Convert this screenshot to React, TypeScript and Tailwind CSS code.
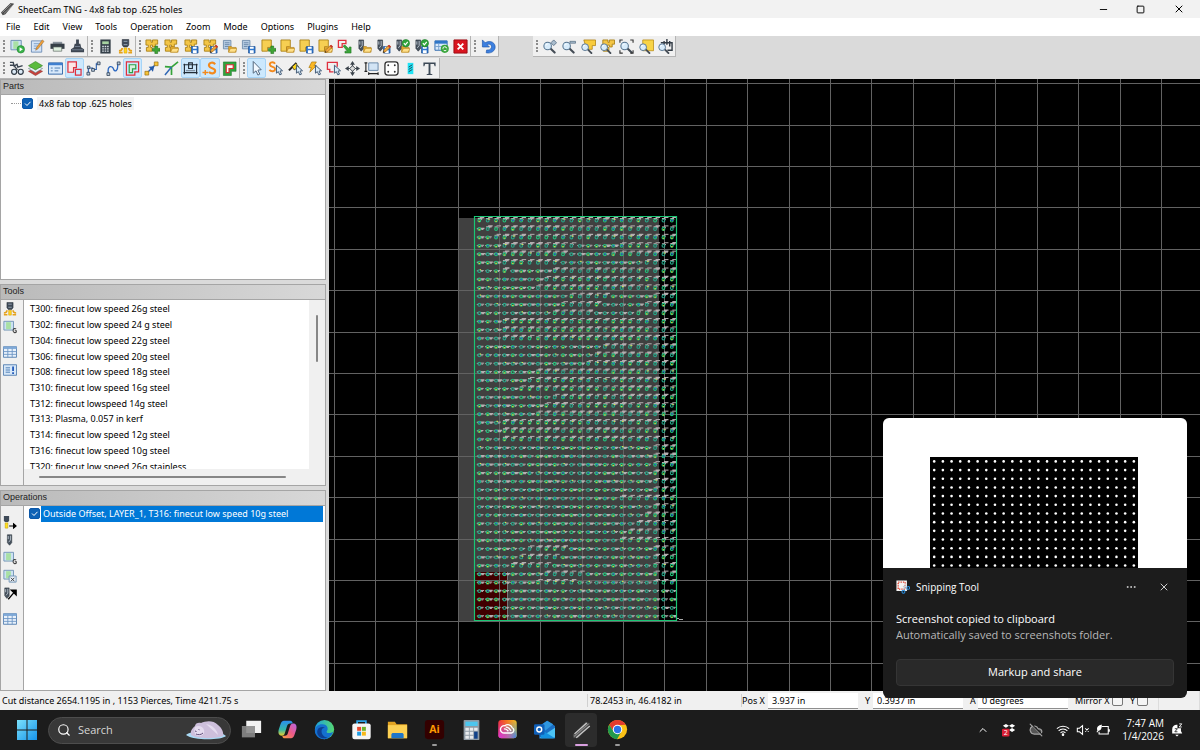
import { useState } from "react";
import type { ReactNode } from "react";
import clsx from "clsx";
import { ChevronUp, CloudOff, Ellipsis, Minus, Search, Square, X } from "lucide-react";

/* ---------- icon building blocks, all on a 16x16 box ---------- */

function Icon({ children, className }: { children: ReactNode; className?: string }) {
  return (
    <svg viewBox="0 0 16 16" className={className || "h-4 w-4"} fill="none" aria-hidden="true">
      {children}
    </svg>
  );
}

const Plus = () => <path d="M10.500 7.500h3v2.500h2.500v3h-2.500v2.500h-3v-2.500H8v-3h2.500z" fill="#3fa535" stroke="#1d6b18" strokeWidth=".6" />;
const Folder = () => (
  <>
    <path d="M7 14V8h3l1 1h4v5z" fill="#e0a92c" stroke="#a8781a" strokeWidth=".6" />
    <path d="M7 14l2-4h7l-2 4z" fill="#ffe08a" stroke="#b8871f" strokeWidth=".6" />
  </>
);
const Disk = () => (
  <>
    <path d="M8 8h7v7H8z" fill="#2f78d0" stroke="#174a8c" strokeWidth=".7" />
    <path d="M9.500 8.300h4v2.200h-4zM9.500 12h4v3h-4z" fill="#fff" />
  </>
);
const Pencil = () => (
  <>
    <path d="M7.500 14.500l1-3 5-5 2 2-5 5z" fill="#f0a63c" stroke="#8a5a14" strokeWidth=".6" />
    <path d="M12.500 7.500l1.500-1.500 2 2-1.500 1.500z" fill="#c9342b" />
    <path d="M7.500 14.500l.5-1.700 1.200 1.200z" fill="#222" />
  </>
);
const Check = () => (
  <>
    <circle cx="11.500" cy="4.500" r="4" fill="#2fa43a" stroke="#1a7425" strokeWidth=".6" />
    <path d="M9.500 4.500l1.500 1.700 2.600-3.200" stroke="#fff" strokeWidth="1.300" />
  </>
);
const Parts = () => (
  <path
    d="M1 1h5.500v2.500H8V1h5.500v4.500H11v3H8v-2H6v2.500h1.500v4H1.500V9h2V6.500H1z"
    fill="#f3c546"
    stroke="#a67c12"
    strokeWidth=".9"
  />
);
const Block = () => <path d="M1 1h10v8H7v4H1z" fill="#f6cf52" stroke="#a67c12" strokeWidth=".9" />;
const Sheets = () => (
  <>
    <path d="M1.500 1.500h8v9h-8z" fill="#b7cce2" stroke="#6b88a8" strokeWidth=".9" />
    <path d="M3 4h5M3 6h5M3 8h4" stroke="#6483a5" strokeWidth=".9" />
  </>
);
const Drill = () => (
  <>
    <path d="M2 1h5v9l-2.500 3L2 10z" fill="#47525e" stroke="#28313a" strokeWidth=".6" />
    <path d="M3 6V2.500M3.500 9.500L5.500 7V2" stroke="#c8d2dc" strokeWidth=".9" />
  </>
);
const Lens = () => (
  <>
    <path d="M8.500 9.500l5 5" stroke="#444c55" strokeWidth="2.200" strokeLinecap="round" />
    <circle cx="6" cy="7.500" r="4" fill="#d8ecfb" stroke="#54738f" strokeWidth="1.100" />
    <path d="M4 7a2 2 0 0 1 2-1.700" stroke="#fff" strokeWidth="1" />
  </>
);
const Pointer = () => (
  <path d="M7.500 4.500v8.500l2-1.700 1.600 3.500 1.800-.8-1.600-3.300 2.700-.3z" fill="#d9ecfb" stroke="#3c5470" strokeWidth="1" />
);
const Sheet = () => (
  <>
    <path d="M1 1.500h11v10H1z" fill="#cde2f3" stroke="#6d90b3" strokeWidth="1" />
    <path d="M3.500 2.500h5.500v8H3.500z" fill="#a9e0a4" />
  </>
);
const Torch = () => (
  <>
    <path d="M4.500.500h7v6l-1.500 2H6l-1.500-2z" fill="#3f4a58" stroke="#272f39" strokeWidth=".6" />
    <path d="M6 2.500h4M6 6h4" stroke="#98a7b6" strokeWidth="1" />
    <path d="M6.500 9.500h3V15h-3z" fill="#ffd51c" stroke="#d79a00" strokeWidth=".6" />
    <path d="M4.500 9.500c0 2-1 3-3.500 3M11.500 9.500c0 2 1 3 3.500 3M1 14.500h4M11 14.500h4" stroke="#e5a11a" strokeWidth="1.800" />
  </>
);

const row1a = [
  ["Process new job", <><Sheet /><circle cx="11.500" cy="11" r="4" fill="#39b44a" stroke="#1c7d2a" strokeWidth=".6" /><path d="M10.200 8.800v4.400l3.500-2.200z" fill="#fff" /></>],
  ["Edit job", <><path d="M1.500 2h11v12h-11z" fill="#d5e4f7" stroke="#6f8fb8" /><path d="M4 5h6M4 7.500h5M4 10h4" stroke="#7c9fca" /><path d="M6 12l1-3L13 1l2 1.500-6.500 8z" fill="#f0a03a" stroke="#8b5c20" strokeWidth=".5" /></>],
  ["Print", <><path d="M3 3h10v3H3z" fill="#8a939c" /><path d="M.5 5h15v5.500H.5z" fill="#363f47" /><path d="M3.500 8.500h9V13h-9z" fill="#dff0df" stroke="#58625f" strokeWidth=".7" /></>],
  ["Run post", <><path d="M6.500.500h3V5H11l1 4 3 2v3H1v-3l3-2 1-4h1.500z" fill="#3d4652" /><path d="M2 11.500h12M5 8h6" stroke="#738091" /></>],
] as [string, ReactNode][];

const row1b = [
  ["Calculator", <><path d="M2.500.500h11v15h-11z" fill="#343f48" /><path d="M4.500 2.500h7v3h-7z" fill="#a7d3a0" /><path d="M4.500 8h7M4.500 10.500h7M4.500 13h7" stroke="#dde4ea" strokeWidth="1.400" strokeDasharray="1.700 .9" /></>],
  ["Tool set", <Torch />],
] as [string, ReactNode][];

const row1c = [
  ["New part set", <><Parts /><Plus /></>],
  ["Open part set", <><Parts /><Folder /></>],
  ["Save part set", <><Parts /><Disk /></>],
  ["Edit part set", <><Parts /><Disk /><Pencil /></>],
  ["Open sheets", <><Sheets /><Folder /></>],
  ["Save sheets", <><Sheets /><Disk /></>],
  ["New part", <><Block /><Plus /></>],
  ["Open part", <><Block /><Folder /></>],
  ["Save part", <><Block /><Disk /></>],
  ["Edit part", <><Block /><Folder /><Pencil /></>],
  ["Import drawing", <><path d="M1.500 1.500h8v3.500H5.500v4h-4z" stroke="#e02f3c" strokeWidth="1.400" /><path d="M6.500 7.500l2-1 4.500 4.500V8.500h2V15H8.500v-2H11z" fill="#3aa63a" stroke="#1d741d" strokeWidth=".6" /></>],
  ["Open tools", <><Drill /><Folder /></>],
  ["Edit tools", <><Drill /><Disk /><Pencil /></>],
  ["Open checked tools", <><Drill /><Folder /><Check /></>],
  ["Save checked tools", <><Drill /><Disk /><Check /></>],
  ["Reload table", <><path d="M1 2h13v10H1z" fill="#d9e9fa" stroke="#2c67ad" /><path d="M1 2h13v3H1z" fill="#2f76c8" /><path d="M1 8h13M5 5v7" stroke="#7aa3d1" /><circle cx="11.500" cy="10.500" r="4.300" fill="#39a53c" /><path d="M9.500 10.500a2 2 0 0 1 4-.5M13.500 11.500a2 2 0 0 1-3.500 0" stroke="#fff" strokeWidth="1" /></>],
  ["Stop", <><path d="M1 1h14v14H1z" fill="#d9151f" stroke="#9c0c14" /><path d="M5 5l6 6M11 5l-6 6" stroke="#fff" strokeWidth="2" /></>],
] as [string, ReactNode][];

const row1d = [
  ["Undo", <><path d="M1.500 1v7.500h7.500L6.500 6C10 4.500 12 7 11 9.500c-.8 2-3 2.500-5 2.200l-.5 3c4 .9 8.500-.8 9.500-5C16 4.500 10.500.5 4.500 4z" fill="#3d80e0" stroke="#1f55a8" strokeWidth=".7" /></>],
] as [string, ReactNode][];

const zoomBar = [
  ["Zoom in", <><Lens /><path d="M12.500 1l3 3-3 3-3-3z" fill="#a9bccd" stroke="#4b6379" strokeWidth=".8" /></>],
  ["Zoom out", <><Lens /><path d="M9.500 2.500h6v2h-6z" fill="#a9bccd" stroke="#4b6379" strokeWidth=".7" /></>],
  ["Zoom to part", <><path d="M3 1h12.500v6H12v4H6z" fill="#f8cb3c" stroke="#ad7e0c" strokeWidth=".8" /><g transform="translate(-1 2) scale(.9)"><Lens /></g></>],
  ["Zoom to parts", <><g transform="translate(2 0)"><Parts /></g><g transform="translate(-1 2) scale(.9)"><Lens /></g></>],
  ["Zoom to extents", <><Lens /><path d="M1 4V1h3M12 1h3v3M15 12v3h-3M4 15H1v-3" stroke="#333" strokeWidth="1.200" /></>],
  ["Zoom to sheet", <><path d="M4 1h11.500v11.500H4z" fill="#f8d447" stroke="#b88a12" strokeWidth=".8" /><g transform="translate(-1 2) scale(.9)"><Lens /></g></>],
  ["Zoom to machine", <><path d="M3 4h12v8h-5M6.500 2v4M9.500 0v6M12.500 2v6" stroke="#333c46" strokeWidth="1.500" /><g transform="translate(-1 2) scale(.9)"><Lens /></g></>],
] as [string, ReactNode][];

const row2a = [
  ["Machine view", <><path d="M1 1.500h3.500l1 4 3-2 1 3 5-1.500M1 4.500h4l4 5" stroke="#3a4450" strokeWidth="1.500" /><circle cx="5.500" cy="11.500" r="2.700" fill="#dceaf6" stroke="#2f3944" strokeWidth="1.300" /><circle cx="12.500" cy="11.500" r="2.700" fill="#dceaf6" stroke="#2f3944" strokeWidth="1.300" /></>],
  ["Layers", <><path d="M.5 11L8 8l7.500 3L8 15.500z" fill="#c8413b" stroke="#8c2723" strokeWidth=".6" /><path d="M.5 8L8 5l7.500 3L8 12.500z" fill="#e7f0f7" stroke="#577" strokeWidth=".6" /><path d="M.5 5L8 .5 15.500 5 8 9.500z" fill="#5bbb3e" stroke="#2f7c1f" strokeWidth=".6" /></>],
  ["Properties", <><path d="M.5 2h15v12H.5z" fill="#d8e9fb" stroke="#2f65a6" /><path d="M.5 2h15v2.500H.5z" fill="#3f7fcf" /><path d="M3 7.500h2M7 7.500h6M3 10.500h2M7 10.500h4" stroke="#4b7ab0" /></>],
  ["Show outlines", <><path d="M1 1h9v6H7v5H1z" fill="#fde5e5" stroke="#df2f3f" strokeWidth="1.300" /><path d="M9 9h6v6H9z" stroke="#df2f3f" strokeWidth="1.300" /></>],
  ["Show nodes", <><path d="M2.500 13V7.500h4.500V9l4 0V3h3" stroke="#2a5fae" strokeWidth="1.200" /><path d="M1 12h3v3H1zM1.500 5.500h2.600v2.600H1.500zM6 8h3v3H6zM12 1h3v3h-3z" fill="#b8c8da" stroke="#26384e" strokeWidth=".8" /></>],
  ["Show path", <><path d="M2.500 13.500C1 4 7 5 8 8.500s5 3 4.500-5.500" stroke="#2a66c0" strokeWidth="1.400" /><path d="M1 12.500h3v3H1zM12 1h3v3h-3z" fill="#b8c8da" stroke="#26384e" strokeWidth=".8" /></>],
  ["Show offset", <><path d="M1.500 1h13v10.500h-4V15h-9z" stroke="#e02f3c" strokeWidth="1.300" /><path d="M4.500 4h7v4.500H8v4H4.500z" fill="#d8f1df" stroke="#2ca046" strokeWidth="1.300" /></>],
  ["Show rapids", <><path d="M3.500 12.500l9-9" stroke="#2a66c0" strokeWidth="1.500" /><path d="M5 6l6-.5-1.500 6z" fill="#2459a8" /><path d="M1 11h4v4H1zM11 1h4v4h-4z" fill="#f5c235" stroke="#94690a" strokeWidth=".7" /></>],
  ["Show direction", <><path d="M1 6l7 .5L15 1M8 6.500V15" stroke="#35a33a" strokeWidth="1.800" /><path d="M1 15l7-8.500" stroke="#3168b5" strokeWidth="1.600" /></>],
  ["Show machine", <><path d="M.5 4h15M.5 12.500h15" stroke="#222c37" strokeWidth="1.300" /><path d="M1.500 3v11M14.500 3v11M6 2h4v6H6z" stroke="#222c37" strokeWidth="1.200" /><path d="M3 9.500h10v1.500H3z" fill="#8393a3" /></>],
  ["Show starts", <><path d="M14 3.500C12 .5 7 1.500 7.500 5s6.500 2 6.500 5.500-5 3.500-6.500 1" stroke="#f38a1d" strokeWidth="2.300" /><path d="M3.500 9.500v5.500M.5 12.200h6" stroke="#f38a1d" strokeWidth="1.500" /></>],
  ["Show cut width", <><path d="M1.500 1H15v10h-5v4.500H1.500z" fill="#2fa43c" stroke="#1b7326" strokeWidth=".6" /><path d="M4.500 4H12v4H7.500v4.500h-3z" fill="#fff" stroke="#de2b37" strokeWidth="1.300" /></>],
] as [string, ReactNode][];

const row2b = [
  ["Select", <path d="M4.500.500v12.500l3-2.500L9.500 15l2-1-2-4.300 3.500-.4z" fill="#f3f9ff" stroke="#4d6279" strokeWidth="1" />],
  ["Select starts", <><path d="M7.500 3C6 .5 1.500 1 2 4s5.500 1.500 5.500 4.500S3 11.500 1.500 9.500" stroke="#f38a1d" strokeWidth="2" /><g transform="translate(1.500 0)"><Pointer /></g></>],
  ["Edit start points", <><path d="M1 10l8-8" stroke="#222" strokeWidth="2.200" /><path d="M4.500 6l4-3.500 3 4-5 3z" fill="#ffd91c" stroke="#222" strokeWidth=".7" /><g transform="translate(1.500 0)"><Pointer /></g></>],
  ["Edit tabs", <><path d="M5 1h5L7.500 5H10l-7 7 1.500-5H2z" fill="#fbb823" stroke="#a87509" strokeWidth=".7" /><g transform="translate(1.500 0)"><Pointer /></g></>],
  ["Select contour", <><path d="M8 11.500H4V9H1.500V1.500H12V6" stroke="#df2f3f" strokeWidth="1.400" /><g transform="translate(1.500 0)"><Pointer /></g></>],
  ["Pan", <><path d="M8 1v14M1 8h14" stroke="#3c444c" strokeWidth="1.200" /><path d="M8 0l2.600 4H5.400zM8 16l-2.600-4h5.200zM0 8l4-2.600v5.200zM16 8l-4 2.600V5.400z" fill="#3c444c" /><path d="M8 5l3 3-3 3-3-3z" fill="#ddd" stroke="#3c444c" /></>],
  ["Measure", <><path d="M5 2h10v8H5z" fill="#d2e4f5" stroke="#6585a6" /><path d="M2 2v9M.5 2h3M.5 11h3M5 13.500h10M5 12v3M15 12v3" stroke="#222" strokeWidth="1.200" /></>],
  ["Plate corners", <><rect x="1" y="1" width="14" height="14" rx="3" fill="#fff" stroke="#333" strokeWidth="1.400" /><path d="M4.500 4.500h.01M11.500 4.500h.01M4.500 11.500h.01M11.500 11.500h.01" stroke="#333" strokeWidth="2" strokeLinecap="round" /></>],
  ["Cut sheet", <><path d="M5 2h6v12H5z" fill="#1fe3f5" /><path d="M6 6.500L10 4M6 9l4-2.500M6 11.500L10 9" stroke="#234" strokeWidth=".9" /></>],
  ["Text", <path d="M1.500 1.500h13v4h-1l-.8-2.300H9v10.300l2 .5v1H5v-1l2-.5V3.200H3.300l-.8 2.300h-1z" fill="#3d4956" />],
] as [string, ReactNode][];

const tableIcon = (
  <>
    <path d="M.5 2h15v12H.5z" fill="#e8f1fb" stroke="#4b79ad" />
    <path d="M.5 2h15v2.500H.5z" fill="#7fa9d8" />
    <path d="M1 7.500h14M1 10.700h14M5.500 4v10M10.500 4v10" stroke="#6b95c4" />
  </>
);

const sheetG = (
  <>
    <Sheet />
    <path d="M15 10.500c-1-1.200-3.500-1-3.500 1.500s2.500 3 3.700 1.800v-1.500h-1.700" stroke="#444" strokeWidth="1.200" />
  </>
);

function ToolButton({ label, children, active }: { label: string; children: ReactNode; active?: boolean }) {
  return (
    <button
      type="button"
      aria-label={label}
      className={clsx(
        "flex min-w-0 flex-1 items-center justify-center rounded-xs border",
        active ? "border-[#a6d4f7] bg-[#cce8fd]" : "border-transparent hover:bg-[#e0f0fc]",
      )}
    >
      <Icon className="h-[15px] w-[15px] shrink-0">{children}</Icon>
    </button>
  );
}

function Toolbar({ items, width, active = [] }: { items: [string, ReactNode][]; width: string; active?: string[] }) {
  return (
    <div className={clsx("flex h-[21px] border-r border-b border-[#b4b4b4] bg-[#f0f0f0] pl-[3px]", width)}>
      <div className="my-1 w-1 border-l-2 border-dotted border-[#8c8c8c]" />
      <div className="flex flex-1">
        {items.map(([label, art]) => (
          <ToolButton key={label} label={label} active={active.includes(label)}>
            {art}
          </ToolButton>
        ))}
      </div>
    </div>
  );
}

/* ---------- left dock ---------- */

const tools = [
  "T300: finecut low speed 26g steel",
  "T302: finecut low speed 24 g steel",
  "T304: finecut low speed 22g steel",
  "T306: finecut low speed 20g steel",
  "T308: finecut low speed 18g steel",
  "T310: finecut low speed 16g steel",
  "T312: finecut lowspeed 14g steel",
  "T313: Plasma, 0.057 in kerf",
  "T314: finecut low speed 12g steel",
  "T316: finecut low speed 10g steel",
  "T320: finecut low speed 26g stainless",
];

function Panel({ title, side, children }: { title: string; side?: ReactNode; children: ReactNode }) {
  return (
    <section className="flex min-h-0 flex-1 flex-col border border-[#a5a5a5] bg-[#f0f0f0]">
      <h2 className="h-[15px] shrink-0 border-b border-[#a5a5a5] bg-linear-to-r from-[#bababa] to-[#d8d8d8] pl-0.5 font-['Liberation_Sans'] text-[9px] leading-[13px] text-[#222]">
        {title}
      </h2>
      <div className="flex min-h-0 flex-1">
        {side && <div className="flex w-[23px] shrink-0 flex-col border-r border-[#a5a5a5] pl-px">{side}</div>}
        {children}
      </div>
    </section>
  );
}

function SideButton({ label, children }: { label: string; children: ReactNode }) {
  return (
    <button type="button" aria-label={label} className="flex h-[18px] w-4 items-center justify-center">
      <Icon className="h-[14px] w-[14px]">{children}</Icon>
    </button>
  );
}

function Tick({ id, checked, onChange }: { id: string; checked: boolean; onChange: () => void }) {
  return (
    <span className="grid h-[11px] w-[11px] shrink-0">
      <input
        id={id}
        type="checkbox"
        checked={checked}
        onChange={onChange}
        className="col-start-1 row-start-1 h-[11px] w-[11px] appearance-none rounded-[2px] border border-[#0b57a8] bg-white checked:bg-[#0f62b5]"
      />
      {checked && (
        <svg viewBox="0 0 11 11" className="pointer-events-none col-start-1 row-start-1 h-[11px] w-[11px]" fill="none">
          <path d="M3 5.500l2 2 3.500-3.700" stroke="#fff" strokeWidth="1" />
        </svg>
      )}
    </span>
  );
}

function LeftDock() {
  const [partOn, setPartOn] = useState(true);
  const [opOn, setOpOn] = useState(true);

  return (
    <aside className="flex w-[326px] shrink-0 flex-col gap-1">
      <Panel title="Parts">
        <div className="flex-1 bg-white pt-0.5 pl-2.5">
          <div className="flex items-center">
            <span className="mr-px w-[10px] border-t border-dotted border-[#999]" />
            <Tick id="part" checked={partOn} onChange={() => setPartOn(!partOn)} />
            <label htmlFor="part" className="ml-1 bg-[#f3f3f3] px-0.5 leading-[13px]">
              4x8 fab top .625 holes
            </label>
          </div>
        </div>
      </Panel>

      <Panel
        title="Tools"
        side={
          <>
            <SideButton label="New tool"><Torch /></SideButton>
            <SideButton label="Tool code">{sheetG}</SideButton>
            <span className="h-[7px]" />
            <SideButton label="Tool table">{tableIcon}</SideButton>
            <SideButton label="Tool notes">
              <path d="M.5 2h15v12H.5z" fill="#d6e7f8" stroke="#4b79ad" />
              <path d="M3 5.500h5M3 8h5M3 10.500h5" stroke="#3f73ae" />
              <path d="M11.500 4v5M11.500 10.500v2" stroke="#1d55b8" strokeWidth="2" />
            </SideButton>
          </>
        }
      >
        <div className="flex min-w-0 flex-1 flex-col">
          <div className="flex min-h-0 flex-1">
            <div className="min-h-0 flex-1 overflow-hidden bg-white">
              <ul className="grid h-[174px] auto-rows-fr pt-px pl-[6px] leading-[15px]">
                {tools.map((t) => (
                  <li key={t}>{t}</li>
                ))}
              </ul>
            </div>
            <div className="flex w-4 flex-col items-center pt-[15px]">
              <span className="h-[47px] w-0.5 rounded bg-[#868686]" />
            </div>
          </div>
          <div className="flex h-4 items-center pl-[15px]">
            <span className="h-0.5 w-[247px] rounded bg-[#868686]" />
          </div>
        </div>
      </Panel>

      <Panel
        title="Operations"
        side={
          <>
            <span className="h-[7px]" />
            <SideButton label="New jet operation">
              <path d="M1 1h6v5L6 8H2L1 6z" fill="#3f4a58" /><path d="M2.500 9h3v6h-3z" fill="#ffe11c" stroke="#c79b00" strokeWidth=".6" />
              <path d="M7 12.500h8M12 10l3 2.500-3 2.500z" fill="#000" stroke="#000" strokeWidth="1.200" />
            </SideButton>
            <SideButton label="New drill operation"><g transform="translate(3 1)"><Drill /></g></SideButton>
            <SideButton label="Insert code">{sheetG}</SideButton>
            <SideButton label="Insert rule">
              <Sheet />
              <path d="M7 8h8v7H7z" fill="#e6eff8" stroke="#6d90b3" />
              <path d="M9 10l4 4M13 10l-4 4" stroke="#333" />
            </SideButton>
            <SideButton label="Move operation">
              <Drill />
              <path d="M6 14l6-7M9.500 3.500H15V9z" fill="#000" stroke="#000" strokeWidth="1.500" />
            </SideButton>
            <span className="h-[7px]" />
            <SideButton label="Operation table">{tableIcon}</SideButton>
          </>
        }
      >
        <div className="min-w-0 flex-1 bg-white pr-0.5 pl-[5px]">
          <div className="flex items-center">
            <Tick id="op" checked={opOn} onChange={() => setOpOn(!opOn)} />
            <label htmlFor="op" className="ml-px h-4 flex-1 bg-[#0078d7] pl-0.5 leading-[15px] whitespace-nowrap text-white">
              Outside Offset, LAYER_1, T316: finecut low speed 10g steel
            </label>
          </div>
        </div>
      </Panel>
    </aside>
  );
}

/* ---------- drawing area ---------- */

const COLS = 24;
const ROWS = 48;

function noise(a: number, b: number) {
  const n = Math.sin(a * 12.9898 + b * 78.233) * 43758.5453;
  return n - Math.floor(n);
}

// the rapid label next to a pierce sits level with it on some runs and above it on others
function isLevel(col: number, row: number) {
  if (row > 43) return true;
  if (col < 3) return row > col;
  if (col > 20) return false;
  return noise(Math.floor((col + row) / 5), Math.floor(row / 3) + 3) < 0.05 + row / 75;
}

function Hole({ col, row }: { col: number; row: number }) {
  const x = 150.3 + col * 8.37;
  const y = 141.3 + row * 8.42;
  const n = noise(col, row);
  const m = noise(row + 7, col + 2);
  const label = isLevel(col, row)
    ? `M${x - 2.500} ${y}h1.500M${x + 1} ${y - 0.300}h${3 + m * 2}M${x + 2} ${y + 0.700}h${1 + m * 2}`
    : `M${x - 1.500} ${y - 1.800}h${3 + m * 3}M${x + 0.500} ${y - 2.800}h4.500M${x + 1.500} ${y - 1}h1`;
  return (
    <g>
      <path d={label} stroke="#b5afb1" strokeWidth={m > 0.5 ? 1.3 : 1} />
      <circle cx={x} cy={y + 0.300} r="1.400" stroke={n > 0.6 ? "#27a88a" : "#22c37c"} strokeWidth="1.100" />
      {n < 0.35 && <path d={`M${x - 0.700} ${y + 1}h1.500`} stroke="#c9d63a" strokeWidth="1.200" />}
      {n > 0.35 && n < 0.55 && <path d={`M${x - 0.500} ${y}h1.500`} stroke="#2c62dc" strokeWidth="1.300" />}
      {n > 0.9 && <path d={`M${x + 0.500} ${y - 1}h1.300`} stroke="#e0e04a" strokeWidth="1.100" />}
    </g>
  );
}

function Canvas() {
  const lines = Array.from({ length: 80 }, (_, i) => i);
  return (
    <main className="flex min-w-0 flex-1 bg-black">
      <svg width="100%" height="100%" fill="none" role="img" aria-label="Nested part with tool paths">
        <path d="M129 139h201v404H129z" fill="#404040" />
        <path d="M146 493h32v48h-32z" fill="#400000" />
        <path d="M178.500 493v48" stroke="#777" />
        {lines.map((i) => (
          <g key={i} stroke="#626262">
            <line x1={Math.round(4.500 + i * 41.370) + 0.500} x2={Math.round(4.500 + i * 41.370) + 0.500} y1="0" y2="100%" />
            <line x1="0" x2="100%" y1={Math.round(4.200 + i * 41.400) + 0.500} y2={Math.round(4.200 + i * 41.400) + 0.500} />
          </g>
        ))}
        {Array.from({ length: ROWS }, (_, row) =>
          Array.from({ length: COLS }, (_, col) => <Hole key={`${row}-${col}`} col={col} row={row} />),
        )}
        <path d="M145.500 137.500h202v404h-202z" stroke="#18c774" strokeWidth="1.200" />
        <path d="M348 539.500h2M350 540.500h4" stroke="#aaa" />
      </svg>
    </main>
  );
}

/* ---------- notification ---------- */

function Toast() {
  return (
    <div
      role="status"
      className="absolute right-[13px] bottom-[52px] w-[304px] overflow-hidden rounded-md bg-[#1c1c1c] font-['Open_Sans',sans-serif] text-[11px] text-white"
    >
      <div className="flex h-[150px] items-end justify-center bg-white pr-0.5">
        <svg width="208" height="111" aria-hidden="true">
          <rect width="208" height="111" fill="#000" />
          {Array.from({ length: 13 * 24 }, (_, i) => (
            <circle key={i} cx={4.200 + (i % 24) * 8.680} cy={4.400 + Math.floor(i / 24) * 8.680} r="1.300" fill="#fff" />
          ))}
        </svg>
      </div>
      <div className="px-[13px] pt-[11px] pb-3">
        <div className="flex h-4 items-center">
          <svg viewBox="0 0 16 16" className="h-[14px] w-[14px]" fill="none" aria-hidden="true">
            <path d="M.5.500h12v12H.5z" fill="#f4f4f4" />
            <path d="M2.500 2.500h8v8h-8z" stroke="#e0402a" strokeWidth="1.500" strokeDasharray="1.500 1.200" />
            <path d="M8 7l5 4M11 6l-3 6" stroke="#bdc6cf" strokeWidth="1.300" />
            <circle cx="14" cy="9" r="1.600" stroke="#2a8fe0" strokeWidth="1.200" />
            <circle cx="8.500" cy="13.500" r="1.700" stroke="#2a8fe0" strokeWidth="1.200" />
          </svg>
          <span className="ml-[6px] flex-1 text-[10px]">Snipping Tool</span>
          <button type="button" aria-label="More" className="mr-[21px]">
            <Ellipsis className="h-3 w-3 text-[#ccc]" />
          </button>
          <button type="button" aria-label="Dismiss" className="mr-1">
            <X className="h-3 w-3 text-[#ccc]" strokeWidth={2} />
          </button>
        </div>
        <p className="mt-4 leading-4">Screenshot copied to clipboard</p>
        <p className="leading-4 text-[#b8b8b8]">Automatically saved to screenshots folder.</p>
        <button type="button" className="mt-4 h-[27px] w-full rounded border border-[#353535] bg-[#292929]">
          Markup and share
        </button>
      </div>
    </div>
  );
}

/* ---------- status bar ---------- */

function StatusBar() {
  const field = "h-4 w-[90px] border-b border-[#8e8e8e] bg-white px-1";
  const box = "h-[11px] w-[11px] appearance-none rounded-[2px] border border-[#777] bg-[#f5f5f5] checked:bg-[#0f62b5]";
  return (
    <footer className="flex h-[19px] items-center bg-[#f0f0f0] whitespace-nowrap">
      <span className="flex-1 pl-0.5">Cut distance 2654.1195 in , 1153 Pierces, Time 4211.75 s</span>
      <span className="w-[154px] border-l border-[#d0d0d0] pl-0.5">78.2453 in, 46.4182 in</span>
      <label htmlFor="posx" className="w-[27px] border-l border-[#d0d0d0]">Pos X</label>
      <input id="posx" className={field} defaultValue="3.937 in" />
      <label htmlFor="posy" className="w-[15px] pl-[7px]">Y</label>
      <input id="posy" className={field} defaultValue="0.3937 in" />
      <label htmlFor="angle" className="w-[15px] pl-[7px]">A</label>
      <input id="angle" className={field} defaultValue="0 degrees" />
      <label htmlFor="mx" className="w-[44px] pl-[7px]">Mirror X</label>
      <input id="mx" type="checkbox" className={box} />
      <label htmlFor="my" className="w-[14px] pl-[7px]">Y</label>
      <input id="my" type="checkbox" className={box} />
      <span className="ml-[10px] h-full w-[42px] border-x border-[#dcdcdc]" />
    </footer>
  );
}

/* ---------- taskbar ---------- */

const apps = [
  { name: "Task View", art: <><path d="M6 2h17v14H6z" fill="#f2f2f2" /><path d="M1 8h15v13H1z" fill="#8a8a8a" fillOpacity=".9" /></> },
  {
    name: "Copilot",
    art: (
      <>
        <path d="M8 2h7c2 0 2.500 1 3 3h-3c-2 0-3 1-3.500 3L9 16c-.5 2-1.500 3-3.500 3C2 19 1 16 2 12l2-6c.8-2.500 2-4 4-4z" fill="url(#cpa)" />
        <path d="M16 22H9c-2 0-2.500-1-3-3h3c2 0 3-1 3.500-3L15 8c.5-2 1.500-3 3.500-3 3.500 0 4.500 3 3.500 7l-2 6c-.8 2.500-2 4-4 4z" fill="url(#cpb)" />
      </>
    ),
  },
  {
    name: "Edge",
    art: (
      <>
        <circle cx="12" cy="12" r="11" fill="url(#edg)" />
        <path d="M1 13C1.500 8 6 5.500 10 6c4 .4 6 3 5.500 6-.3 1.500-1.500 2-1 3 .7 1.500 5 1.500 7.500-.5-1.500 5-6 8.500-10.500 8.500C5.500 23 .7 18 1 13z" fill="#1470cf" />
        <path d="M9 12c-1.500 4 1.500 8.500 6.500 9.500C8 24 2 18.500 4 12.500 5.500 9 10 8.500 12.500 10c-1.800 0-3 .8-3.500 2z" fill="#0d3f91" />
      </>
    ),
  },
  {
    name: "Microsoft Store",
    art: (
      <>
        <path d="M7 6V2.500h10V6" stroke="#2ba4e8" strokeWidth="2" />
        <rect x="1.500" y="5" width="21" height="18" rx="2.500" fill="#f5f5f5" />
        <path d="M7 9h4.500v4.500H7z" fill="#e8482e" /><path d="M12.500 9H17v4.500h-4.500z" fill="#6bb52c" />
        <path d="M7 14.500h4.500V19H7z" fill="#1e9ce4" /><path d="M12.500 14.500H17V19h-4.500z" fill="#f6b91a" />
      </>
    ),
  },
  {
    name: "File Explorer",
    art: (
      <>
        <path d="M1 3h8l2 3h12v16H1z" fill="#e2a322" />
        <path d="M1 7h22v15H1z" fill="#fcd053" />
        <path d="M5 22v-4c0-1.500 1-2 2-2h10c1 0 2 .5 2 2v4z" fill="#1f76c8" />
      </>
    ),
  },
  {
    name: "Illustrator",
    dot: "bg-[#9a9a9a] w-[5px]",
    art: (
      <>
        <rect x="1" y="1" width="22" height="22" rx="3.500" fill="#330000" />
        <text x="12" y="16.500" textAnchor="middle" fontFamily="Open Sans" fontWeight="700" fontSize="12" fill="#ff9a00">Ai</text>
      </>
    ),
  },
  {
    name: "Calculator",
    art: (
      <>
        <rect x="3" y="1" width="18" height="23" rx="1" fill="#8e9aa4" />
        <path d="M5 3h14v5H5z" fill="#4cc6ee" />
        <path d="M5 10h4v3.500H5zM10 10h4v3.500h-4zM15 10h4v3.500h-4zM5 14.500h4V18H5zM10 14.500h4V18h-4zM5 19h4v3.500H5zM10 19h4v3.500h-4z" fill="#e7eaed" />
        <path d="M15 14.500h4v8h-4z" fill="#11428a" />
      </>
    ),
  },
  {
    name: "Creative Cloud",
    art: (
      <>
        <rect x="1.500" y="1" width="21" height="21" rx="3.500" fill="url(#cca)" />
        <rect x="1.500" y="1" width="21" height="21" rx="3.500" fill="url(#ccb)" />
        <rect x="1.500" y="1" width="21" height="21" rx="3.500" fill="url(#ccc)" />
        <path d="M8.500 16a4.200 4.200 0 1 1 .5-8.300 5.300 5.300 0 0 1 8.500 2.300A3.200 3.200 0 0 1 16.500 16zM8 11.500c2-1 3 0 5 2.500M10 9.500c2-1 4 1 6 4" stroke="#fff" strokeWidth="1.500" />
      </>
    ),
  },
  {
    name: "Outlook",
    art: (
      <>
        <path d="M6 8l9-6 9 6v14H6z" fill="#1a6fc4" />
        <path d="M8 7l7-5 7 4-9 7z" fill="#2f97e0" />
        <path d="M6 22l18-12v10c0 1-1 2-2 2z" fill="#4cc4f5" />
        <path d="M8 12l16 10H8z" fill="#1490df" />
        <rect x="0" y="6" width="12" height="12" rx="1.500" fill="#0f5fb8" />
        <circle cx="6" cy="12" r="2.800" stroke="#fff" strokeWidth="1.600" />
      </>
    ),
  },
  {
    name: "SheetCam",
    dot: "bg-[#d9a0e0] w-[13px]",
    current: true,
    art: (
      <>
        <path d="M2 18L17 3l5 2L9 21l-6 1z" fill="#4c4c4c" />
        <path d="M4 17L18 4.500M6 21.500L21.500 8" stroke="#c9c9c9" strokeWidth="1.500" />
        <path d="M3.500 20L20 5.500" stroke="#8a8a8a" strokeWidth="1.200" />
      </>
    ),
  },
  {
    name: "Chrome",
    dot: "bg-[#9a9a9a] w-[5px]",
    art: (
      <>
        <circle cx="12" cy="12" r="11" fill="#fbc116" />
        <path d="M2.500 6.500A11 11 0 0 1 21.500 6.500L12 7 7.700 14.500z" fill="#e33b2e" />
        <path d="M2.500 6.500A11 11 0 0 0 11.500 23L16.300 14.500 7.700 14.500z" fill="#229a4c" />
        <circle cx="12" cy="12" r="5.400" fill="#fff" />
        <circle cx="12" cy="12" r="4.200" fill="#2a72e8" />
      </>
    ),
  },
];

function Gradients() {
  return (
    <svg className="absolute h-0 w-0" aria-hidden="true">
      <defs>
        <linearGradient id="cpa" x1="0" y1="0" x2="0" y2="1"><stop stopColor="#2a8df0" /><stop offset=".6" stopColor="#35b8a8" /><stop offset="1" stopColor="#e8cf2e" /></linearGradient>
        <linearGradient id="cpb" x1="1" y1="0" x2="0" y2="1"><stop stopColor="#b467e8" /><stop offset=".5" stopColor="#ee5a86" /><stop offset="1" stopColor="#f9a03f" /></linearGradient>
        <linearGradient id="edg" x1="0" y1="0" x2="1" y2="0"><stop stopColor="#1c9ee0" /><stop offset="1" stopColor="#55d873" /></linearGradient>
        <linearGradient id="cca" x1="0" y1="0" x2="1" y2="0"><stop stopColor="#f0302a" /><stop offset="1" stopColor="#f7c21c" /></linearGradient>
        <radialGradient id="ccb" cx="1" cy="1" r="1"><stop stopColor="#2f7df0" /><stop offset=".5" stopColor="#4a9fe0" stopOpacity=".5" /><stop offset="1" stopColor="#2f7df0" stopOpacity="0" /></radialGradient>
        <radialGradient id="ccc" cx="0" cy="1" r="1"><stop stopColor="#d83ce0" /><stop offset="1" stopColor="#d83ce0" stopOpacity="0" /></radialGradient>
        <linearGradient id="win" x1="0" y1="0" x2="1" y2="1"><stop stopColor="#7be0fa" /><stop offset="1" stopColor="#1694ec" /></linearGradient>
      </defs>
    </svg>
  );
}

function Taskbar() {
  return (
    <nav className="flex h-10 items-center bg-[#1c1c1c] font-['Open_Sans',sans-serif] text-white">
      <Gradients />
      <button type="button" aria-label="Start" className="ml-[17px]">
        <svg viewBox="0 0 20 20" className="h-5 w-5" aria-hidden="true">
          <path d="M0 0h9.500v9.500H0zM10.500 0H20v9.500h-9.500zM0 10.500h9.500V20H0zM10.500 10.500H20V20h-9.500z" fill="url(#win)" />
        </svg>
      </button>
      <div className="ml-[11px] flex h-[27px] w-[183px] items-center rounded-full border border-[#4d4d4d] bg-[#383838] pr-1 pl-2">
        <Search className="h-[14px] w-[14px] shrink-0" />
        <input aria-label="Search" placeholder="Search" className="ml-[7px] w-0 flex-1 text-[11px] placeholder:text-[#d6d6d6]" />
        <svg viewBox="0 0 40 20" className="h-5 w-10 shrink-0" aria-hidden="true">
          <path d="M0 15c3-3 10-3 16-3s20-1 24 4c-4 4-32 5-40-1z" fill="#a9d9f5" />
          <path d="M5 15C4 10 7 8 9 6c0-3 4-4 6-3 5-2 12-3 17 2 4 3 6 8 5 11-8 3-26 3-32-1z" fill="#cdbfdc" />
          <path d="M9 7c3-2 8-1 9 3s-2 6-5 6-6-3-4-9zM20 4c6 1 11 5 12 11" fill="#e4dbef" />
          <path d="M9 11l1.500.5M12.500 9.500l1 .3M10 14c2 1 5 1 7-1" stroke="#5c4a78" strokeWidth="1" fill="none" />
        </svg>
      </div>
      <div className="ml-0.5 flex h-full w-[403px]">
        {apps.map((app) => (
          <button
            key={app.name}
            type="button"
            aria-label={app.name}
            className={clsx("mx-0.5 my-[3px] flex flex-1 flex-col items-center rounded pt-[6px]", app.current && "bg-[#2c2c2c]")}
          >
            <svg viewBox="0 0 24 24" className="h-[21px] w-[21px]" fill="none" aria-hidden="true">
              {app.art}
            </svg>
            {app.dot && <span className={clsx("mt-1 h-0.5 rounded-full", app.dot)} />}
          </button>
        ))}
      </div>

      <div className="ml-auto flex items-center pr-4">
        <ChevronUp className="mr-[13px] h-3 w-3" />
        <svg viewBox="0 0 16 16" className="mr-[13px] h-[14px] w-[14px]" aria-hidden="true">
          <path d="M4.500 1L8 3.200 4.500 5.500 1 3.200zM11.500 1L15 3.200l-3.500 2.300L8 3.200zM11.500 5.800L15 8l-3.500 2.300L8 8z" fill="#fff" />
          <rect x="0" y="6.500" width="8.500" height="9" rx="1.500" fill="#d91f35" />
          <text x="4.200" y="14" fontSize="8" fontFamily="Open Sans" textAnchor="middle" fill="#fff">2</text>
        </svg>
        <CloudOff className="mr-[13px] h-[14px] w-[14px] text-[#a5a5a5]" fill="#555" />
        <svg viewBox="0 0 16 16" className="mr-[6px] h-[14px] w-[14px]" fill="none" stroke="#fff" strokeWidth="1.200" aria-hidden="true">
          <path d="M1 6.500a10 10 0 0 1 14 0M3 9a7 7 0 0 1 10 0M5.200 11.300a4 4 0 0 1 5.600 0" />
          <circle cx="8" cy="13.300" r=".9" fill="#fff" />
        </svg>
        <svg viewBox="0 0 16 16" className="mr-[6px] h-[14px] w-[14px]" fill="none" stroke="#fff" strokeWidth="1.200" aria-hidden="true">
          <path d="M1.500 6v4h2.500l3.500 3V3L4 6zM10.500 6l4 4M14.500 6l-4 4" />
        </svg>
        <svg viewBox="0 0 16 16" className="mr-3 h-[14px] w-[14px]" fill="none" stroke="#fff" strokeWidth="1.200" aria-hidden="true">
          <path d="M6.500 4h7.500v8.500H3.500V10M15.200 7v3" />
          <path d="M2 8c-1-3 1-5 4-5.500C6 6 5 9 2 8zM1 10.500L4 6" fill="#fff" />
        </svg>
        <div className="mr-[6px] text-right text-[10px] leading-[13px]">
          <div>7:47 AM</div>
          <div>1/4/2026</div>
        </div>
        <svg viewBox="0 0 16 16" className="h-[14px] w-[14px]" aria-hidden="true">
          <path d="M2.500 12V7a5 5 0 0 1 6-5v4h4v3l1.500 3zM6 13.500h4L8 15.500z" fill="#fff" />
          <path d="M5.500 6.500h3l-3 3.500h3M10.500 1h3l-3 3.500h3" stroke="#fff" fill="none" />
          <path d="M5.500 6.500h3l-3 3.500h3" stroke="#222" fill="none" />
        </svg>
      </div>
    </nav>
  );
}

export default function App() {
  return (
    <div className="relative flex h-screen min-h-[600px] flex-col overflow-hidden bg-[#dadada] font-['Noto_Sans',sans-serif] text-[9px] text-black">
      <header className="flex h-[18px] shrink-0 items-center bg-[#f2f2f2]">
        <svg viewBox="0 0 16 16" className="ml-px h-[14px] w-[14px]" fill="none" aria-hidden="true">
          <path d="M0 12L11 1l4 1L5 14l-3 1z" fill="#444" />
          <path d="M1.500 12L12 2M3 13.500L14 3" stroke="#aaa" strokeWidth=".9" />
        </svg>
        <h1 className="ml-[3px] flex-1 pt-0.5">SheetCam TNG - 4x8 fab top .625 holes</h1>
        <button type="button" aria-label="Minimize" className="mr-[27px]"><Minus className="h-[11px] w-[11px]" /></button>
        <button type="button" aria-label="Maximize" className="mr-[28px]"><Square className="h-[9px] w-[9px]" strokeWidth={2.500} /></button>
        <button type="button" aria-label="Close" className="mr-[15px]"><X className="h-3 w-3" /></button>
      </header>

      <nav className="flex h-[18px] shrink-0 items-center gap-[13px] bg-white pl-[6px]">
        {["File", "Edit", "View", "Tools", "Operation", "Zoom", "Mode", "Options", "Plugins", "Help"].map((m) => (
          <button key={m} type="button">{m}</button>
        ))}
      </nav>

      <div className="flex shrink-0 flex-col gap-px">
        <div className="flex">
          <Toolbar items={row1a} width="w-[88px]" />
          <Toolbar items={row1b} width="w-[48px]" />
          <Toolbar items={row1c} width="w-[335px]" />
          <Toolbar items={row1d} width="w-[28px]" />
          <div className="w-[34px]" />
          <Toolbar items={zoomBar} width="w-[143px]" />
        </div>
        <div className="flex">
          <Toolbar items={row2a} width="w-[240px]" active={["Show outlines", "Show offset", "Show machine", "Show starts"]} />
          <Toolbar items={row2b} width="w-[200px]" active={["Select"]} />
        </div>
      </div>

      <div className="flex min-h-0 flex-1 gap-[3px]">
        <LeftDock />
        <Canvas />
      </div>

      <div className="shrink-0">
        <StatusBar />
        <Taskbar />
      </div>
      <Toast />
    </div>
  );
}
